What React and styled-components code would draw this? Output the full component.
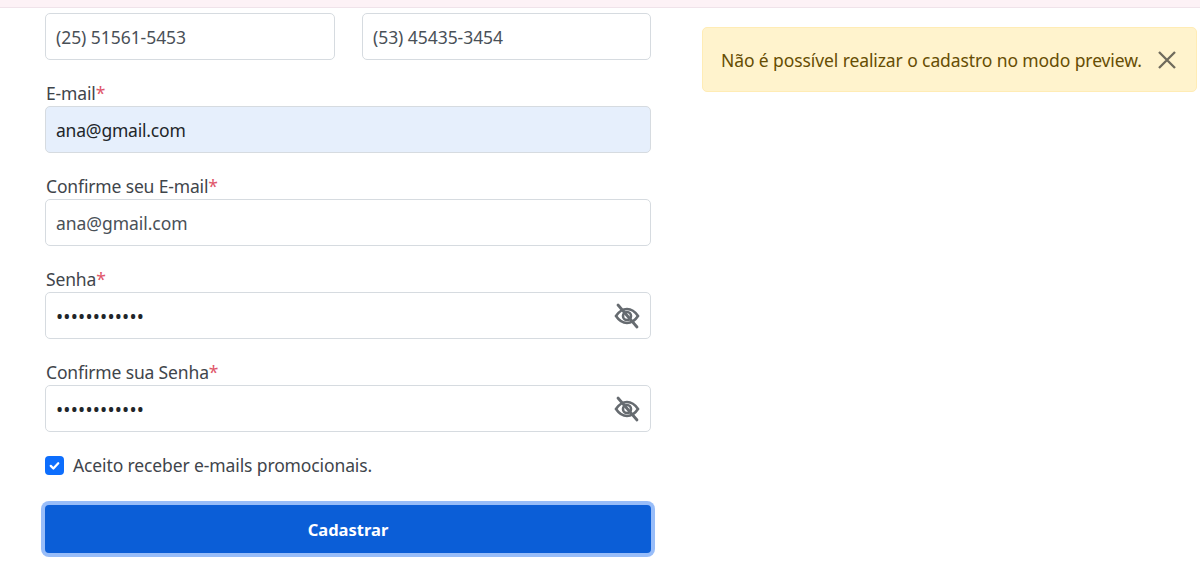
import React from "react";
import styled, { createGlobalStyle } from "styled-components";

const GlobalStyle = createGlobalStyle`
  html, body { margin: 0; padding: 0; background: #fff; }
  body { font-family: "Noto Sans", "Open Sans", sans-serif; color: #212529; overflow: hidden; }
  * { box-sizing: border-box; }
`;

const TopBar = styled.div`
  height: 8px;
  background: #fdf2f6;
  border-bottom: 1px solid #f0e3ea;
`;

const Page = styled.div`
  display: flex;
  align-items: flex-start;
  gap: 51px;
  min-height: 564px;
  padding: 5px 3px 0 45px;
`;

const Form = styled.form`
  width: 606px;
  display: flex;
  flex-direction: column;
`;

const Row = styled.div`
  display: grid;
  grid-template-columns: 290px 289px;
  gap: 27px;
`;

const Field = styled.div`
  margin-top: 22px;
  position: relative;
`;

const Label = styled.label`
  display: block;
  height: 24px;
  padding-left: 1px;
  font-size: 17.5px;
  line-height: 22px;
  letter-spacing: -0.15px;
  color: #3f454b;
`;

const Star = styled.span`
  color: #e0566a;
`;

const Input = styled.input`
  display: block;
  width: 100%;
  height: 47px;
  padding: 0 10px;
  font-family: "Noto Sans", sans-serif;
  font-size: 17.5px;
  letter-spacing: ${(p) => (p.$filled ? "-0.2px" : "-0.05px")};
  color: ${(p) => (p.$filled ? "#212529" : "#495057")};
  background: ${(p) => (p.$filled ? "#e6effc" : "#fff")};
  border: 1px solid #d6dbe0;
  border-radius: 5px;
  outline: none;
`;

const Secret = styled(Input)`
  padding: 2px 48px 0 10px;
  font-size: 19px;
  color: #212529;
  letter-spacing: 0.2px;
`;

const EyeButton = styled.span`
  position: absolute;
  right: 11px;
  bottom: 10px;
  width: 26px;
  height: 26px;
  color: #666b70;
`;

const CheckRow = styled.div`
  display: flex;
  align-items: center;
  gap: 9px;
  margin-top: 23px;
  height: 20px;
`;

const CheckBox = styled.span`
  width: 19px;
  height: 19px;
  border-radius: 4px;
  background: #0d6efd;
  display: flex;
  align-items: center;
  justify-content: center;
`;

const CheckText = styled.span`
  font-size: 17.5px;
  letter-spacing: -0.12px;
  color: #3f454b;
`;

const Submit = styled.button`
  margin-top: 30px;
  height: 48px;
  width: 100%;
  border: none;
  border-radius: 4px;
  background: #0b5ed7;
  color: #fff;
  font-family: "Noto Sans", sans-serif;
  font-size: 16.5px;
  font-weight: 700;
  box-shadow: 0 0 0 4px #98bdf9;
`;

const Alert = styled.div`
  width: 495px;
  height: 65px;
  margin-top: 14px;
  padding: 0 19px 0 18px;
  display: flex;
  align-items: center;
  justify-content: space-between;
  background: #fff3cd;
  border: 1px solid #ffecb5;
  border-radius: 5px;
  color: #664d03;
  font-size: 17.5px;
  letter-spacing: -0.1px;
`;

const Close = styled.span`
  width: 20px;
  height: 20px;
  color: #6f6a5c;
`;

const EyeOff = () => (
  <svg viewBox="0 0 26 26" width="26" height="26" fill="none" stroke="currentColor" strokeWidth="2.6" strokeLinecap="round">
    <path d="M2 13 C6 7 10 6 13 6 C16 6 20 7 24 13 C20 19 16 20 13 20 C10 20 6 19 2 13 Z" />
    <circle cx="13" cy="13" r="4" />
    <path d="M4 2 L23 24" strokeWidth="2.8" />
  </svg>
);

const PasswordField = ({ label }) => (
  <Field>
    <Label>
      {label}
      <Star>*</Star>
    </Label>
    <Secret type="password" value="abcdefghijkl" readOnly />
    <EyeButton>
      <EyeOff />
    </EyeButton>
  </Field>
);

const App = () => {
  return (
    <>
      <GlobalStyle />
      <TopBar />
      <Page>
        <Form>
          <Row>
            <Input value="(25) 51561-5453" readOnly />
            <Input value="(53) 45435-3454" readOnly />
          </Row>
          <Field>
            <Label>
              E-mail<Star>*</Star>
            </Label>
            <Input $filled value="ana@gmail.com" readOnly />
          </Field>
          <Field>
            <Label>
              Confirme seu E-mail<Star>*</Star>
            </Label>
            <Input value="ana@gmail.com" readOnly />
          </Field>
          <PasswordField label="Senha" />
          <PasswordField label="Confirme sua Senha" />
          <CheckRow>
            <CheckBox>
              <svg viewBox="0 0 20 20" width="15" height="15" fill="none" stroke="#fff" strokeWidth="3" strokeLinecap="round" strokeLinejoin="round">
                <path d="M5 10.5 L8.5 14 L15 7" />
              </svg>
            </CheckBox>
            <CheckText>Aceito receber e-mails promocionais.</CheckText>
          </CheckRow>
          <Submit type="button">Cadastrar</Submit>
        </Form>
        <Alert>
          <span>Não é possível realizar o cadastro no modo preview.</span>
          <Close>
            <svg viewBox="0 0 20 20" width="20" height="20" fill="none" stroke="currentColor" strokeWidth="2.3">
              <path d="M2 2 L18 18 M18 2 L2 18" />
            </svg>
          </Close>
        </Alert>
      </Page>
    </>
  );
};

export default App;
